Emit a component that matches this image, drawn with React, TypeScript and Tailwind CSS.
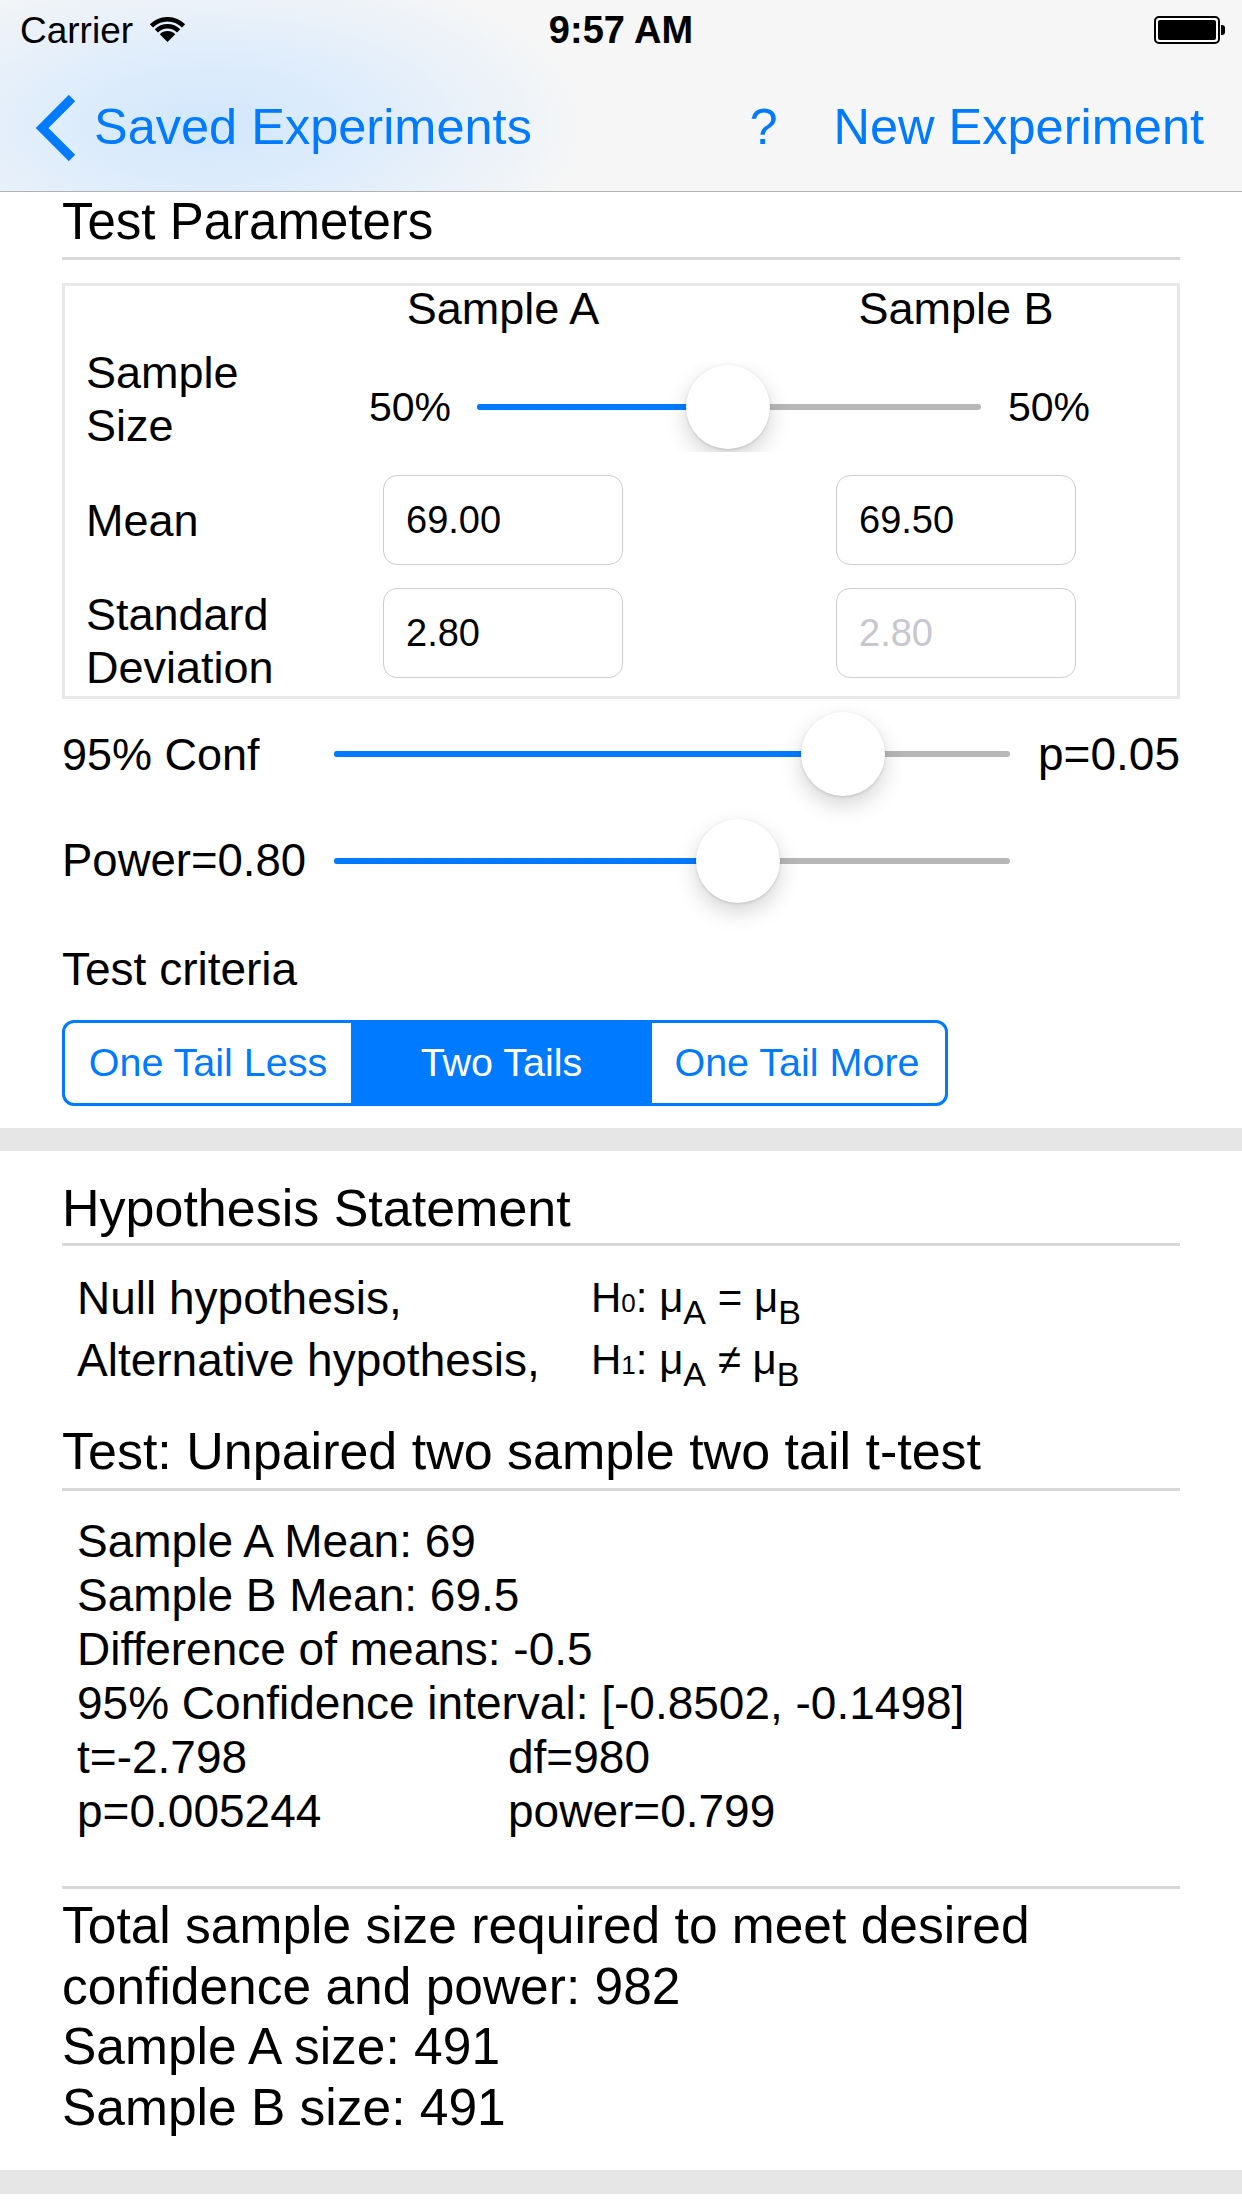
import React from "react";

const BLUE = "#007aff";

function Slider({
  width,
  fillClass,
  thumbClass,
}: {
  width: string;
  fillClass: string;
  thumbClass: string;
}) {
  return (
    <div className={`relative h-[6px] ${width}`}>
      <div className="absolute inset-0 rounded-full bg-[#b7b7b7]" />
      <div className={`absolute left-0 top-0 h-[6px] rounded-full bg-[#007aff] ${fillClass}`} />
      <div
        className={`absolute top-1/2 -translate-y-1/2 w-[84px] h-[84px] rounded-full bg-white shadow-[0_9px_22px_rgba(0,0,0,0.17),0_1px_3px_rgba(0,0,0,0.14)] ${thumbClass}`}
      />
    </div>
  );
}

function Wifi() {
  return (
    <svg width="37" height="26" viewBox="0 0 37 26" className="ml-[16px]">
      <path d="M2.41 8.91 A22.75 22.75 0 0 1 34.59 8.91" fill="none" stroke="#000" strokeWidth="4.5" />
      <path d="M7.36 13.86 A15.75 15.75 0 0 1 29.64 13.86" fill="none" stroke="#000" strokeWidth="4.5" />
      <path d="M18.5 25 L10.72 17.22 A11 11 0 0 1 26.28 17.22 Z" fill="#000" />
    </svg>
  );
}

function Battery() {
  return (
    <div className="flex items-center mr-[17px]">
      <div className="w-[66px] h-[28px] border-[2px] border-black rounded-[5px] p-[2px] bg-white">
        <div className="w-full h-full bg-black rounded-[2px]" />
      </div>
      <div className="w-[4px] h-[10px] bg-black rounded-r-[3px] ml-[1px]" />
    </div>
  );
}

function Field({ value, placeholder }: { value: string; placeholder?: boolean }) {
  return (
    <div
      className={`w-[240px] h-[90px] border border-[#cdcdcd] rounded-[14px] pl-[22px] flex items-center text-[38px] ${
        placeholder ? "text-[#c7c7cd]" : "text-black"
      }`}
    >
      {value}
    </div>
  );
}

function Mu({ sub }: { sub: string }) {
  return (
    <>
      μ<span className="text-[34px] leading-none relative top-[12px]">{sub}</span>
    </>
  );
}

export default function App() {
  return (
    <div className="w-[1242px] h-[2208px] bg-white overflow-hidden text-black font-['Liberation_Sans','DejaVu_Sans',Arial,sans-serif]">
      {/* Header */}
      <div className="h-[192px] bg-[#f6f6f6] bg-[radial-gradient(ellipse_380px_170px_at_210px_125px,#d2e7fc_0%,#e0edfb_45%,rgba(246,246,246,0)_100%)] border-b border-[#b2b2b2] flex flex-col">
        <div className="h-[60px] grid grid-cols-3 items-center">
          <div className="flex items-center pl-[20px]">
            <span className="text-[37px] leading-none">Carrier</span>
            <Wifi />
          </div>
          <div className="text-center text-[38px] font-bold leading-none">9:57 AM</div>
          <div className="flex justify-end">
            <Battery />
          </div>
        </div>
        <div className="h-[131px] flex items-center pt-[4px] text-[#007aff]">
          <svg width="40" height="66" viewBox="0 0 40 66" className="ml-[36px]">
            <path d="M36 3 L6 33 L36 63" fill="none" stroke={BLUE} strokeWidth="9" strokeLinejoin="miter" />
          </svg>
          <span className="ml-[18px] text-[50.5px] leading-none">Saved Experiments</span>
          <div className="flex-1" />
          <span className="text-[50.5px] leading-none">?</span>
          <span className="ml-[56px] mr-[38px] text-[50.5px] leading-none">New Experiment</span>
        </div>
      </div>

      {/* Section 1 */}
      <div className="px-[62px] pb-[22px]">
        <div className="text-[51px] leading-[60px] whitespace-nowrap">Test Parameters</div>
        <div className="mt-[5px] h-[3px] bg-[#d8d8d8]" />

        <div className="mt-[23px] border-[3px] border-[#e8e8e8] pl-[21px] pb-[2px]">
          {/* header row */}
          <div className="flex h-[52px] text-[45px] leading-[46px]">
            <div className="w-[297px]" />
            <div className="w-[240px] text-center">Sample A</div>
            <div className="w-[213px]" />
            <div className="w-[240px] text-center">Sample B</div>
          </div>
          {/* sample size row */}
          <div className="flex items-start h-[114px]">
            <div className="w-[283px] mt-[8px] text-[45px] leading-[53px]">
              Sample
              <br />
              Size
            </div>
            <div className="mt-[24px] h-[90px] flex items-center">
              <div className="w-[82px] text-[41px] leading-none">50%</div>
              <div className="ml-[26px] h-[90px] w-[504px] overflow-hidden flex items-center">
                <Slider width="w-[504px]" fillClass="w-[251px]" thumbClass="left-[209px]" />
              </div>
              <div className="ml-[27px] text-[41px] leading-none">50%</div>
            </div>
          </div>
          {/* mean row */}
          <div className="flex items-center h-[90px] mt-[23px]">
            <div className="w-[297px] text-[45px] leading-[53px]">Mean</div>
            <Field value="69.00" />
            <div className="w-[213px]" />
            <Field value="69.50" />
          </div>
          {/* sd row */}
          <div className="flex items-start h-[106px] mt-[23px]">
            <div className="w-[297px] text-[45px] leading-[53px]">
              Standard
              <br />
              Deviation
            </div>
            <Field value="2.80" />
            <div className="w-[213px]" />
            <Field value="2.80" placeholder />
          </div>
        </div>

        {/* Conf */}
        <div className="mt-[13px] h-[84px] flex items-center text-[45px]">
          <div className="w-[272px] leading-none whitespace-nowrap">95% Conf</div>
          <Slider width="w-[676px]" fillClass="w-[509px]" thumbClass="left-[467px]" />
          <div className="flex-1 text-right leading-none text-[46px]">p=0.05</div>
        </div>
        {/* Power */}
        <div className="mt-[23px] h-[84px] flex items-center text-[45.5px]">
          <div className="w-[272px] leading-none whitespace-nowrap">Power=0.80</div>
          <Slider width="w-[676px]" fillClass="w-[404px]" thumbClass="left-[362px]" />
        </div>

        <div className="mt-[39px] text-[46px] leading-[54px]">Test criteria</div>

        <div className="mt-[24px] w-[886px] h-[86px] flex border-[3px] border-[#007aff] rounded-[12px] overflow-hidden text-[39.5px]">
          <div className="w-[289px] flex items-center justify-center text-[#007aff] border-r-[3px] border-[#007aff]">
            One Tail Less
          </div>
          <div className="w-[301px] -ml-[3px] flex items-center justify-center bg-[#007aff] text-white">Two Tails</div>
          <div className="w-[290px] flex items-center justify-center text-[#007aff]">One Tail More</div>
        </div>
      </div>

      <div className="h-[23px] bg-[#e6e6e6]" />

      {/* Section 2 */}
      <div className="px-[62px]">
        <div className="mt-[27px] text-[52px] leading-[60px] whitespace-nowrap">Hypothesis Statement</div>
        <div className="mt-[5px] h-[3px] bg-[#d8d8d8]" />

        <div className="mt-[21px] pl-[15px] grid grid-cols-[514px_1fr] text-[46px] leading-[62px] whitespace-nowrap">
          <div>Null hypothesis,</div>
          <div className="text-[42px]">
            H<span className="text-[26px] leading-none">0</span>: <Mu sub="A" /> = <Mu sub="B" />
          </div>
          <div>Alternative hypothesis,</div>
          <div className="text-[42px]">
            H<span className="text-[26px] leading-none">1</span>: <Mu sub="A" /> ≠ <Mu sub="B" />
          </div>
        </div>

        <div className="mt-[30px] text-[52px] leading-[60px] whitespace-nowrap">
          Test: Unpaired two sample two tail t-test
        </div>
        <div className="mt-[7px] h-[3px] bg-[#d8d8d8]" />

        <div className="mt-[23px] pl-[15px] text-[46px] leading-[54px] whitespace-nowrap">
          <div>Sample A Mean: 69</div>
          <div>Sample B Mean: 69.5</div>
          <div>Difference of means: -0.5</div>
          <div>95% Confidence interval: [-0.8502, -0.1498]</div>
          <div className="grid grid-cols-[431px_1fr]">
            <div>t=-2.798</div>
            <div>df=980</div>
            <div>p=0.005244</div>
            <div>power=0.799</div>
          </div>
        </div>

        <div className="mt-[48px] h-[3px] bg-[#d8d8d8]" />

        <div className="mt-[6px] text-[51.5px] leading-[60.5px] whitespace-nowrap">
          <div>Total sample size required to meet desired</div>
          <div>confidence and power: 982</div>
          <div>Sample A size: 491</div>
          <div>Sample B size: 491</div>
        </div>
      </div>

      <div className="mt-[33px] h-[24px] bg-[#e6e6e6]" />
    </div>
  );
}
